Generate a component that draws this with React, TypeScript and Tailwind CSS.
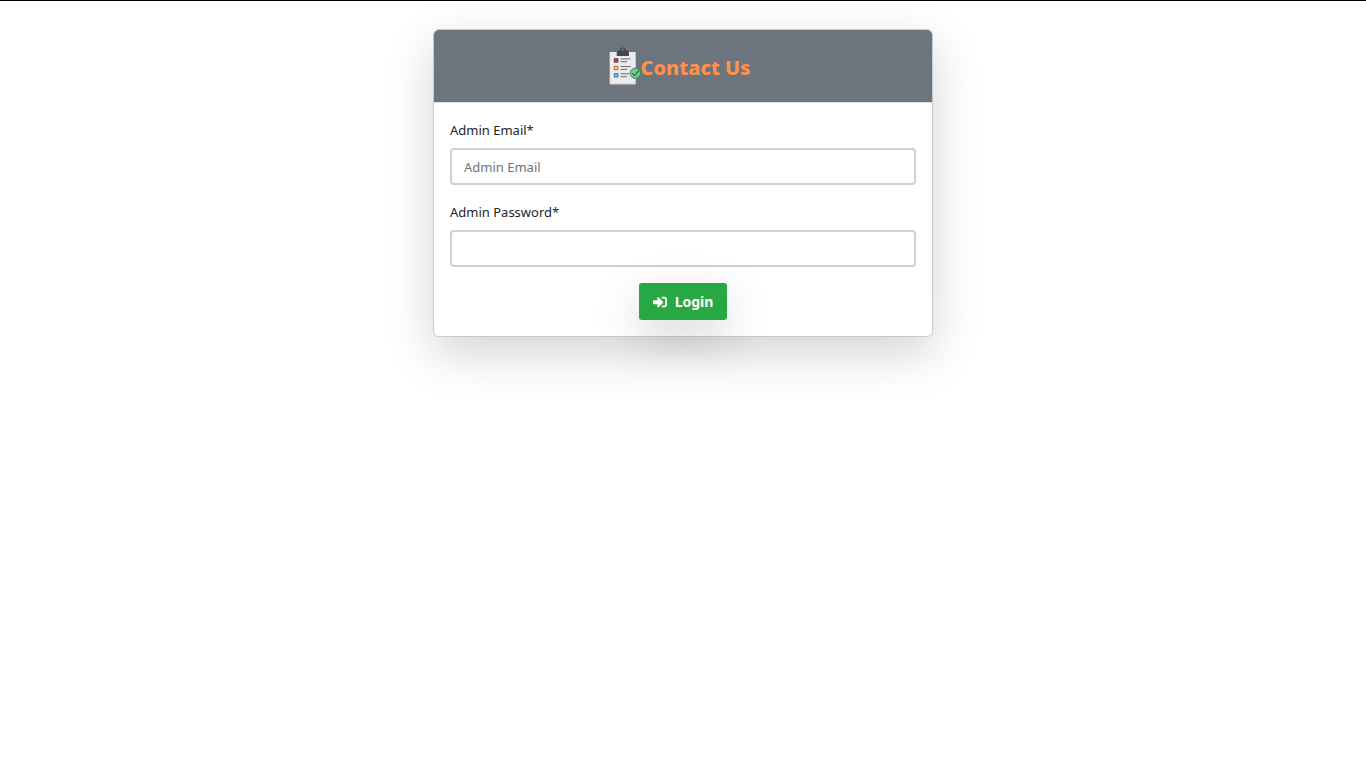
import React, { FormEvent, useState } from "react";
import { FaSignInAlt } from "react-icons/fa";

interface FieldProps {
    id: string;
    label: string;
    type: string;
    placeholder?: string;
    value: string;
    onChange: (value: string) => void;
}

const ClipboardLogo = () => (
    <svg viewBox="0 0 33 40" className="w-[33px] h-10" aria-hidden="true">
        <rect x="1.7" y="6" width="26" height="32.2" rx="0.8" fill="#ececee" />
        <path d="M2 37.9h25.4" stroke="#c9cbce" strokeWidth="0.7" />
        <path
            d="M8.7 10V6.2q0-1.8 1.8-1.8h1a3.3 3.8 0 0 1 6.4 0h1.2q1.8 0 1.8 1.8V10z"
            fill="#45454b"
        />
        <circle cx="14.7" cy="3.6" r="1.2" fill="#777b82" />
        <rect x="6.3" y="12.7" width="3.6" height="3.4" fill="#a34a55" stroke="#6e3844" />
        <rect x="6.3" y="20.2" width="3.6" height="3.4" fill="#fbc98f" stroke="#b0703c" />
        <rect x="6.3" y="27.6" width="3.6" height="3.4" fill="#7cc4ea" stroke="#3b7ca8" />
        <path
            d="M12.6 12.9h10M12.6 15.7h6.5M12.6 20.6h10M12.6 23.4h6.5M12.6 27.8h8.5M12.6 30.7h6.5"
            stroke="#5b5b61"
            strokeWidth="0.9"
        />
        <circle cx="27.3" cy="27.3" r="5.2" fill="#72c88a" stroke="#3d8059" strokeWidth="0.9" />
        <path
            d="m24 27.3 2.4 2.2 4.4-4.6"
            fill="none"
            stroke="#2f6b49"
            strokeWidth="1.1"
        />
    </svg>
);

const Field = ({ id, label, type, placeholder, value, onChange }: FieldProps) => (
    <div className="mb-4">
        <label htmlFor={id} className="block mb-1.5 leading-[23px]">
            {label}
        </label>
        <input
            id={id}
            type={type}
            placeholder={placeholder}
            value={value}
            onChange={(e) => onChange(e.target.value)}
            className="block w-full h-[37px] px-3 rounded border-2 border-[#ced0d8] bg-white outline-none placeholder:text-[#6c757d]"
        />
    </div>
);

const App = () => {
    const [email, setEmail] = useState("");
    const [password, setPassword] = useState("");

    // Handlers
    const login = (e: FormEvent<HTMLFormElement>) => {
        e.preventDefault();
    };

    return (
        <main className="min-h-screen border-t border-black bg-white px-4 pt-7 font-['Noto_Sans',sans-serif] text-[13px] text-[#212529]">
            <div className="mx-auto w-full max-w-[500px] rounded-md border border-[#c8cacc] bg-white shadow-[0_16px_48px_rgba(0,0,0,0.175)]">
                <header className="flex h-[73px] items-center justify-center rounded-t-[5px] border-b border-[#dfdfdf] bg-[#6c757d] pr-2">
                    <ClipboardLogo />
                    <h1 className="pt-1 text-xl font-extrabold text-[#ff914d]">
                        Contact Us
                    </h1>
                </header>
                <form onSubmit={login} className="p-4">
                    <Field
                        id="email"
                        label="Admin Email*"
                        type="email"
                        placeholder="Admin Email"
                        value={email}
                        onChange={setEmail}
                    />
                    <Field
                        id="password"
                        label="Admin Password*"
                        type="password"
                        value={password}
                        onChange={setPassword}
                    />
                    <button
                        type="submit"
                        className="mx-auto flex h-[37px] w-[88px] items-center justify-center gap-2 rounded-[3px] bg-[#28a745] text-sm font-bold text-white shadow-[0_16px_48px_rgba(0,0,0,0.175)]"
                    >
                        <FaSignInAlt className="size-[14px]" />
                        Login
                    </button>
                </form>
            </div>
        </main>
    );
};

export default App;
